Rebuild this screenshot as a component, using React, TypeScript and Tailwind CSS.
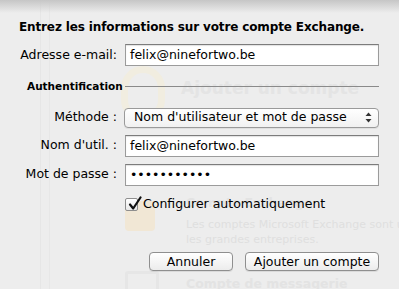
const labelCls = "w-[117px] shrink-0 text-right text-[12.5px] text-black";
const inputCls =
  "h-[22px] w-[254px] border border-[#9b9b9b] border-t-[#7c7c7c] bg-white px-[4px] text-[12.5px] leading-[20px] text-black shadow-[inset_0_1px_1px_rgba(0,0,0,0.12)]";
const buttonCls =
  "h-[19px] rounded-[4px] border border-[#8f8f8f] bg-gradient-to-b from-white to-[#ececec] text-[12.5px] leading-[17px] text-black shadow-[0_1px_0_rgba(0,0,0,0.08)]";

function Checkmark() {
  return (
    <svg width="16" height="16" viewBox="0 0 16 16" className="absolute -top-[3px] left-[1px]">
      <path d="M3 8.5 L6.2 12.5 L13.5 1.5" fill="none" stroke="#111" strokeWidth="2.2" strokeLinecap="round" strokeLinejoin="round" />
    </svg>
  );
}

// faint window content seen through the sheet
function Background() {
  return (
    <div className="flex h-full">
      <div className="w-[41px] shrink-0 border-r border-[#e6e6e6]" />
      <div className="w-[9px] shrink-0 border-r border-[#e7e7e7]" />
      <div className="flex min-w-0 flex-1 flex-col overflow-hidden pl-[71px] pt-[66px]">
        <div className="flex items-start gap-[16px]">
          <div className="h-[56px] w-[44px] shrink-0 rounded-full border-[7px] border-[#f1ede0]" />
          <div className="mt-[10px] whitespace-nowrap text-[17px] font-bold text-[#e4e4e4]">Ajouter un compte</div>
        </div>
        <div className="mt-[73px] flex gap-[27px] pl-[4px]">
          <div className="flex shrink-0 flex-col gap-[40px] pt-[6px]">
            <div className="h-[30px] w-[30px] rounded-[4px] bg-[#f1e7d5]" />
            <div className="h-[24px] w-[34px] rounded-[3px] border-[3px] border-[#e6e6e6]" />
          </div>
          <div className="flex flex-col whitespace-nowrap">
            <div className="text-[12.5px] font-bold leading-[16px] text-[#e3e3e3]">Compte Exchange</div>
            <div className="mt-[6px] text-[11px] leading-[15px] text-[#dfdfdf]">
              Les comptes Microsoft Exchange sont ut
              <br />
              les grandes entreprises.
            </div>
            <div className="mt-[29px] text-[12.5px] font-bold leading-[16px] text-[#e3e3e3]">Compte de messagerie</div>
          </div>
        </div>
      </div>
    </div>
  );
}

export default function App() {
  return (
    <div className="relative h-[289px] w-[399px] overflow-hidden bg-[#ededed] font-['Lucida_Grande','DejaVu_Sans',sans-serif]">
      <Background />

      {/* sheet */}
      <div className="absolute inset-0 flex flex-col">
        <div className="absolute inset-x-0 top-0 h-[13px] bg-gradient-to-b from-[#c6c6c6] to-transparent" />

        <div className="whitespace-nowrap pl-[19px] pt-[19px] text-[12px] font-bold leading-[16px] tracking-[-0.13px] text-black">
          Entrez les informations sur votre compte Exchange.
        </div>

        <div className="mt-[9px] flex items-center gap-[8px]">
          <div className={labelCls}>Adresse e-mail:</div>
          <div className={inputCls}>felix@ninefortwo.be</div>
        </div>

        <div className="mt-[13px] flex items-center">
          <div className="w-[125px] shrink-0 pl-[27px] text-[10.5px] font-bold text-black">Authentification</div>
          <div className="h-px w-[254px] bg-[#8a8a8a]" />
        </div>

        <div className="mt-[13px] flex items-center gap-[7px]">
          <div className={labelCls}>Méthode :</div>
          <div className="flex h-[20px] w-[255px] items-center justify-between rounded-[4px] border border-[#9a9a9a] bg-gradient-to-b from-white to-[#f1f1f1] pl-[9px] pr-[6px] text-[12.5px] text-black shadow-[0_1px_0_rgba(0,0,0,0.06)]">
            <span>Nom d'utilisateur et mot de passe</span>
            <svg width="7" height="11" viewBox="0 0 7 11">
              <path d="M3.5 0.5 L6.5 4 L0.5 4 Z" fill="#333" />
              <path d="M3.5 10.5 L6.5 7 L0.5 7 Z" fill="#333" />
            </svg>
          </div>
        </div>

        <div className="mt-[7px] flex items-center gap-[8px]">
          <div className={labelCls}>Nom d'util. :</div>
          <div className={inputCls}>felix@ninefortwo.be</div>
        </div>

        <div className="mt-[7px] flex items-center gap-[8px]">
          <div className={labelCls}>Mot de passe :</div>
          <div className={inputCls}>•••••••••••</div>
        </div>

        <div className="mt-[9px] flex items-center gap-[5px] pl-[125px]">
          <div className="relative h-[13px] w-[13px] rounded-[2px] border border-[#8e8e8e] bg-gradient-to-b from-white to-[#e9e9e9]">
            <Checkmark />
          </div>
          <span className="text-[12.5px] text-black">Configurer automatiquement</span>
        </div>

        <div className="mt-[38px] flex justify-end gap-[12px] pr-[20px]">
          <button className={buttonCls + " w-[84px]"}>Annuler</button>
          <button className={buttonCls + " w-[134px]"}>Ajouter un compte</button>
        </div>
      </div>
    </div>
  );
}
